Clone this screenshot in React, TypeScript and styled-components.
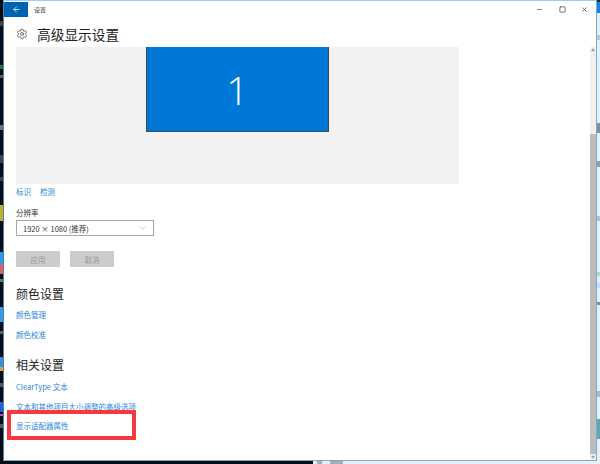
import React from 'react';
import styled, { createGlobalStyle } from 'styled-components';
import { ArrowLeft, ChevronDown, Settings, Minus, Square, X } from 'lucide-react';

const GlobalStyle = createGlobalStyle`
  html, body {
    margin: 0;
    padding: 0;
    background: #0a0d10;
  }
  * {
    box-sizing: border-box;
  }
`;

const Desktop = styled.div`
  position: relative;
  width: 600px;
  height: 464px;
  display: flex;
  flex-direction: column;
  overflow: hidden;
  font-family: 'Noto Sans CJK SC', 'Noto Sans', sans-serif;
`;

const Middle = styled.div`
  display: flex;
  height: 461px;
`;

const LeftStrip = styled.div`
  position: relative;
  width: 3px;
  background: #0a0d10;
`;

const RightStrip = styled.div`
  position: relative;
  flex: 1;
  background: #eceff1;
`;

const Spot = styled.div<{ $top: number; $height: number; $color: string }>`
  position: absolute;
  left: 0;
  right: 0;
  top: ${(p) => p.$top}px;
  height: ${(p) => p.$height}px;
  background: ${(p) => p.$color};
`;

const Window = styled.div`
  width: 594px;
  display: flex;
  flex-direction: column;
  background: #fff;
  border-top: 1px solid #9ccff4;
  border-left: 1px solid #3f82bd;
  border-right: 1px solid #6fade3;
  border-bottom: 1px solid #6fade3;
`;

const TitleBar = styled.div`
  height: 16px;
  display: flex;
  align-items: center;
  flex-shrink: 0;
`;

const BackButton = styled.div`
  width: 24px;
  height: 15px;
  background: #0063b1;
  color: #fff;
  display: flex;
  align-items: center;
  justify-content: center;
`;

const WindowTitle = styled.span`
  margin-left: 6px;
  font-size: 6px;
  color: #444;
`;

const WindowControls = styled.div`
  margin-left: auto;
  width: 52px;
  margin-right: 8px;
  display: flex;
  justify-content: space-between;
  align-items: center;
  color: #555;
`;

const Body = styled.div`
  flex: 1;
  display: flex;
  min-height: 0;
`;

const Content = styled.div`
  flex: 1;
  padding: 5px 0 0 12px;
  min-width: 0;
`;

const PageHeader = styled.div`
  display: flex;
  align-items: center;
  height: 25px;
  padding-bottom: 2px;
  color: #444;
`;

const PageTitle = styled.h1`
  margin: 0 0 0 9px;
  font-size: 13.7px;
  line-height: 20px;
  font-weight: 400;
  color: #222;
`;

const Preview = styled.div`
  width: 443px;
  height: 137px;
  background: #f2f2f2;
  display: flex;
  justify-content: center;
`;

const Monitor = styled.div`
  width: 183px;
  height: 85px;
  background: #0078d7;
  border: 1px solid #3d4850;
  border-top: none;
  color: #fff;
  font-family: 'Open Sans', sans-serif;
  font-size: 39px;
  font-weight: 300;
  display: flex;
  align-items: center;
  justify-content: center;
`;

const LinkRow = styled.div`
  display: flex;
  gap: 9px;
  margin-top: 2px;
`;

const Link = styled.a<{ $gap?: number }>`
  display: block;
  font-size: 7.5px;
  line-height: 11px;
  color: #2a86da;
  margin-top: ${(p) => p.$gap ?? 0}px;
`;

const FieldLabel = styled.div`
  margin-top: 10px;
  font-size: 7.5px;
  line-height: 11px;
  color: #333;
`;

const Select = styled.div`
  width: 138px;
  height: 16px;
  margin-top: 2px;
  padding: 0 5px 0 6px;
  border: 1px solid #a6a6a6;
  display: flex;
  align-items: center;
  justify-content: space-between;
  font-size: 7.5px;
  color: #333;
`;

const ButtonRow = styled.div`
  display: flex;
  gap: 10px;
  margin-top: 15px;
`;

const Button = styled.div`
  width: 44px;
  height: 16px;
  background: #cccccc;
  color: #999;
  font-size: 7.5px;
  display: flex;
  align-items: center;
  justify-content: center;
`;

const SectionTitle = styled.h2<{ $gap: number }>`
  margin: ${(p) => p.$gap}px 0 0;
  font-size: 12px;
  line-height: 16px;
  font-weight: 400;
  color: #222;
`;

const Scrollbar = styled.div`
  width: 6px;
  background: #f0f0f0;
  display: flex;
  flex-direction: column;
  margin-top: 30px;
`;

const ScrollArrow = styled.div`
  height: 6px;
  flex-shrink: 0;
  color: #a0a0a0;
  display: flex;
  align-items: center;
  justify-content: center;
  font-size: 4px;
  line-height: 1;
`;

const ScrollGap = styled.div`
  height: 81px;
`;

const ScrollThumb = styled.div`
  flex: 1;
  background: #bcbcbc;
`;

const BottomStrip = styled.div`
  position: relative;
  height: 3px;
  display: flex;
`;

const TaskbarDark = styled.div`
  width: 313px;
  background: #0a0d10;
`;

const TaskbarLight = styled.div`
  flex: 1;
  background: #eceff1;
  display: flex;
  gap: 8px;
  padding-left: 4px;
`;

const TaskbarMark = styled.div<{ $width: number }>`
  width: ${(p) => p.$width}px;
  height: 3px;
  background: #a9adb0;
`;

const Highlight = styled.div`
  position: absolute;
  left: 7px;
  top: 410px;
  width: 129px;
  height: 30px;
  border: 4px solid #f8383e;
`;

const leftSpots = [
  { top: 21, height: 5, color: '#4a3d34' },
  { top: 65, height: 4, color: '#2f6f4a' },
  { top: 75, height: 3, color: '#6b5e48' },
  { top: 125, height: 5, color: '#6f7375' },
  { top: 155, height: 8, color: '#3f4244' },
  { top: 177, height: 4, color: '#3f4244' },
  { top: 205, height: 16, color: '#c2b020' },
  { top: 252, height: 12, color: '#2a9be8' },
  { top: 264, height: 10, color: '#e06060' },
  { top: 279, height: 3, color: '#6f7375' },
  { top: 307, height: 15, color: '#3a9ae0' },
  { top: 331, height: 3, color: '#5a5e60' },
  { top: 357, height: 10, color: '#3a90d8' },
  { top: 367, height: 4, color: '#e8a030' },
  { top: 383, height: 4, color: '#55585a' },
  { top: 402, height: 10, color: '#2a5fd0' },
  { top: 414, height: 2, color: '#d040a0' },
  { top: 424, height: 4, color: '#55585a' },
];

const rightSpots = [
  { top: 0, height: 2, color: '#2a2a20' },
  { top: 2, height: 11, color: '#1f7fe0' },
  { top: 35, height: 5, color: '#c4c8ca' },
  { top: 123, height: 10, color: '#8a8e92' },
  { top: 161, height: 6, color: '#9a9ea8' },
  { top: 216, height: 5, color: '#bcc0c2' },
  { top: 272, height: 4, color: '#b4dcb4' },
  { top: 283, height: 5, color: '#d4daf0' },
  { top: 302, height: 3, color: '#8a8e92' },
  { top: 391, height: 6, color: '#b4b8ba' },
  { top: 419, height: 20, color: '#6aa4a8' },
];

export default function App() {
  return (
    <>
      <GlobalStyle />
      <Desktop>
        <Middle>
          <LeftStrip>
            {leftSpots.map((s) => (
              <Spot key={s.top} $top={s.top} $height={s.height} $color={s.color} />
            ))}
          </LeftStrip>
          <Window>
            <TitleBar>
              <BackButton>
                <ArrowLeft size={9} strokeWidth={2} />
              </BackButton>
              <WindowTitle>设置</WindowTitle>
              <WindowControls>
                <Minus size={7} strokeWidth={2.4} />
                <Square size={7} strokeWidth={2.8} />
                <X size={7} strokeWidth={2.8} />
              </WindowControls>
            </TitleBar>
            <Body>
              <Content>
                <PageHeader>
                  <Settings size={12} strokeWidth={1.5} />
                  <PageTitle>高级显示设置</PageTitle>
                </PageHeader>
                <Preview>
                  <Monitor>1</Monitor>
                </Preview>
                <LinkRow>
                  <Link>标识</Link>
                  <Link>检测</Link>
                </LinkRow>
                <FieldLabel>分辨率</FieldLabel>
                <Select>
                  1920 × 1080 (推荐)
                  <ChevronDown size={10} strokeWidth={1} color="#777" />
                </Select>
                <ButtonRow>
                  <Button>应用</Button>
                  <Button>取消</Button>
                </ButtonRow>
                <SectionTitle $gap={19}>颜色设置</SectionTitle>
                <Link $gap={7}>颜色管理</Link>
                <Link $gap={9}>颜色校准</Link>
                <SectionTitle $gap={17}>相关设置</SectionTitle>
                <Link $gap={8}>ClearType 文本</Link>
                <Link $gap={9}>文本和其他项目大小调整的高级选项</Link>
                <Link $gap={8}>显示适配器属性</Link>
              </Content>
              <Scrollbar>
                <ScrollArrow>▲</ScrollArrow>
                <ScrollGap />
                <ScrollThumb />
                <ScrollArrow>▼</ScrollArrow>
              </Scrollbar>
            </Body>
          </Window>
          <RightStrip>
            {rightSpots.map((s) => (
              <Spot key={s.top} $top={s.top} $height={s.height} $color={s.color} />
            ))}
          </RightStrip>
        </Middle>
        <BottomStrip>
          <TaskbarDark />
          <TaskbarLight>
            <TaskbarMark $width={5} />
            <TaskbarMark $width={13} />
          </TaskbarLight>
        </BottomStrip>
        <Highlight />
      </Desktop>
    </>
  );
}
